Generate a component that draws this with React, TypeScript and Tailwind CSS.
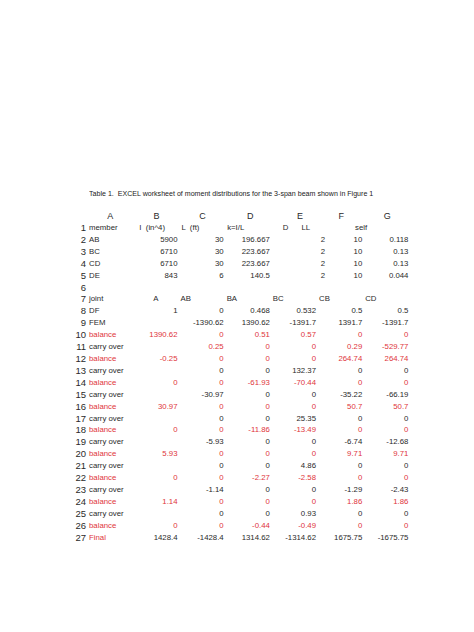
const RED = "text-[#e0353b]";

type Row = {
  n: number;
  label?: string;
  labelRed?: boolean;
  values?: string[];
  valuesRed?: boolean;
};

const upper: Row[] = [
  { n: 2, label: "AB", values: ["5900", "30", "196.667", "2", "10", "0.118"] },
  { n: 3, label: "BC", values: ["6710", "30", "223.667", "2", "10", "0.13"] },
  { n: 4, label: "CD", values: ["6710", "30", "223.667", "2", "10", "0.13"] },
  { n: 5, label: "DE", values: ["843", "6", "140.5", "2", "10", "0.044"] },
];

const lower: Row[] = [
  { n: 8, label: "DF", values: ["1", "0", "0.468", "0.532", "0.5", "0.5"] },
  { n: 9, label: "FEM", values: ["", "-1390.62", "1390.62", "-1391.7", "1391.7", "-1391.7"] },
  { n: 10, label: "balance", labelRed: true, valuesRed: true, values: ["1390.62", "0", "0.51", "0.57", "0", "0"] },
  { n: 11, label: "carry over", valuesRed: true, values: ["", "0.25", "0", "0", "0.29", "-529.77"] },
  { n: 12, label: "balance", labelRed: true, valuesRed: true, values: ["-0.25", "0", "0", "0", "264.74", "264.74"] },
  { n: 13, label: "carry over", values: ["", "0", "0", "132.37", "0", "0"] },
  { n: 14, label: "balance", labelRed: true, valuesRed: true, values: ["0", "0", "-61.93", "-70.44", "0", "0"] },
  { n: 15, label: "carry over", values: ["", "-30.97", "0", "0", "-35.22", "-66.19"] },
  { n: 16, label: "balance", labelRed: true, valuesRed: true, values: ["30.97", "0", "0", "0", "50.7", "50.7"] },
  { n: 17, label: "carry over", values: ["", "0", "0", "25.35", "0", "0"] },
  { n: 18, label: "balance", labelRed: true, valuesRed: true, values: ["0", "0", "-11.86", "-13.49", "0", "0"] },
  { n: 19, label: "carry over", values: ["", "-5.93", "0", "0", "-6.74", "-12.68"] },
  { n: 20, label: "balance", labelRed: true, valuesRed: true, values: ["5.93", "0", "0", "0", "9.71", "9.71"] },
  { n: 21, label: "carry over", values: ["", "0", "0", "4.86", "0", "0"] },
  { n: 22, label: "balance", labelRed: true, valuesRed: true, values: ["0", "0", "-2.27", "-2.58", "0", "0"] },
  { n: 23, label: "carry over", values: ["", "-1.14", "0", "0", "-1.29", "-2.43"] },
  { n: 24, label: "balance", labelRed: true, valuesRed: true, values: ["1.14", "0", "0", "0", "1.86", "1.86"] },
  { n: 25, label: "carry over", values: ["", "0", "0", "0.93", "0", "0"] },
  { n: 26, label: "balance", labelRed: true, valuesRed: true, values: ["0", "0", "-0.44", "-0.49", "0", "0"] },
  { n: 27, label: "Final", labelRed: true, values: ["1428.4", "-1428.4", "1314.62", "-1314.62", "1675.75", "-1675.75"] },
];

const grid = "grid grid-cols-[27px_46.3px_repeat(6,46.2px)] h-[11.92px] leading-[11.92px]";

function Num({ n }: { n: number }) {
  return <div className="text-right pr-[1px] text-[9.5px] text-[#2a2a2a]">{n}</div>;
}

function DataRow({ row, upperTable }: { row: Row; upperTable?: boolean }) {
  return (
    <div className={grid}>
      <Num n={row.n} />
      <div className={`pl-[2px] whitespace-nowrap ${row.labelRed ? RED : "text-[#2a2a2a]"}`}>{row.label}</div>
      {row.values?.map((v, i) => (
        <div
          key={i}
          className={`text-right whitespace-nowrap ${
            upperTable && i === 3 ? "pr-[0px] -mr-[7px]" : "pr-[2px]"
          } ${row.valuesRed ? RED : "text-[#2a2a2a]"}`}
        >
          {v}
        </div>
      ))}
    </div>
  );
}

export default function App() {
  return (
    <div className="w-[474px] h-[632px] bg-white overflow-hidden pt-[188px] pl-[60px] font-['Liberation_Sans',Arial,sans-serif] text-[7.8px] text-[#2a2a2a]">
      <div className="h-[12px] leading-[12px] pl-[29px]">
        <div className="origin-left scale-x-[0.885] text-[8px] whitespace-pre text-[#222]">
          Table 1.  EXCEL worksheet of moment distributions for the 3-span beam shown in Figure 1
        </div>
      </div>

      <div className="grid grid-cols-[27px_46.3px_repeat(6,46.2px)] mt-[9.5px] h-[12.5px] leading-[12px] text-[9px] text-[#2a2a2a]">
        <div />
        <div className="text-center">A</div>
        <div className="text-center">B</div>
        <div className="text-center">C</div>
        <div className="text-center pl-[3px]">D</div>
        <div className="text-center pl-[10px]">E</div>
        <div className="text-center">F</div>
        <div className="text-center">G</div>
      </div>

      <div className={grid}>
        <Num n={1} />
        <div className="pl-[2px]">member</div>
        <div className="pl-[6px] whitespace-pre">I  (in^4)</div>
        <div className="pl-[2px] whitespace-pre">L  (ft)</div>
        <div className="pl-[1.5px]">k=I/L</div>
        <div className="pl-[11px] flex gap-[13px]">
          <span>D</span>
          <span>LL</span>
        </div>
        <div className="pl-[37px]">self</div>
        <div />
      </div>

      {upper.map((r) => (
        <DataRow key={r.n} row={r} upperTable />
      ))}

      <div className={grid}>
        <Num n={6} />
      </div>

      <div className={grid}>
        <Num n={7} />
        <div className="pl-[2px]">joint</div>
        <div className="pl-[20px]">A</div>
        <div className="pl-[1px]">AB</div>
        <div className="pl-[1px]">BA</div>
        <div className="pl-[1px]">BC</div>
        <div className="pl-[1px]">CB</div>
        <div className="pl-[1px]">CD</div>
      </div>

      {lower.map((r) => (
        <DataRow key={r.n} row={r} />
      ))}
    </div>
  );
}
